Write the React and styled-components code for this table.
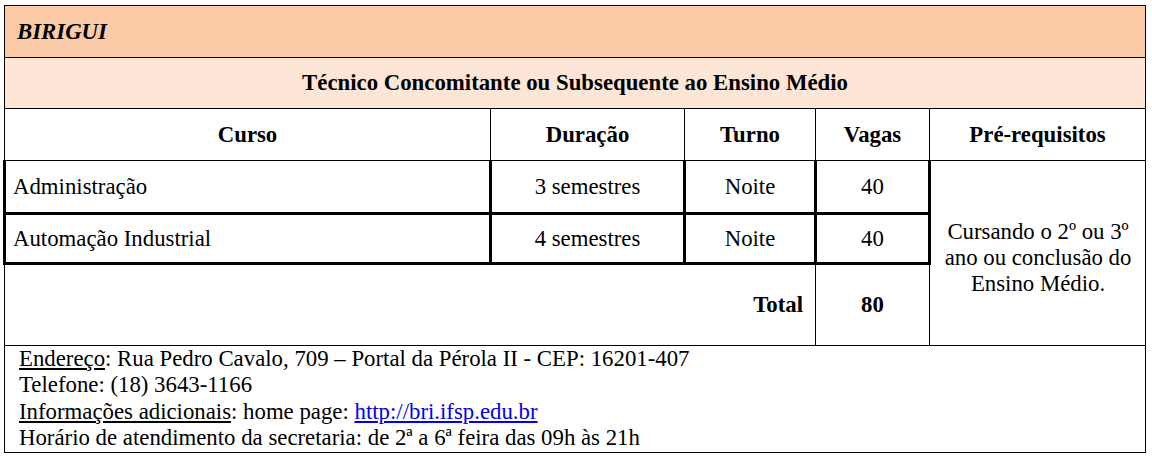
import React from 'react';
import styled, { createGlobalStyle } from 'styled-components';

const GlobalStyle = createGlobalStyle`
    body {
        margin: 0;
        background: #ffffff;
        font-family: "Liberation Serif", "Times New Roman", serif;
        color: #000;
    }
`

const Page = styled.div`
    padding: 5px 0 0 3px;
    width: 1152px;
    height: 457px;
    box-sizing: border-box;
`

const Table = styled.table`
    border-collapse: collapse;
    table-layout: fixed;
    width: 1141px;
    font-family: "Liberation Serif", "Times New Roman", serif;
    font-size: 22.8px;
    color: #000;

    td {
        border: 1px solid #000;
        padding: 0;
        vertical-align: middle;
    }
`

const CampusCell = styled.td`
    background: #fbcaa7;
    height: 51px;
    padding-left: 12px !important;
    font-weight: bold;
    font-style: italic;
`

const TitleCell = styled.td`
    background: #fde6d6;
    height: 50px;
    text-align: center;
    font-weight: bold;
`

const HeadCell = styled.td`
    height: 51px;
    text-align: center;
    font-weight: bold;
`

const DataCell = styled.td`
    height: ${p => p.$h}px;
    text-align: ${p => (p.$left ? 'left' : 'center')};
    padding-left: ${p => (p.$left ? '7px' : '0')} !important;
    border-width: 1px 3px 3px 3px !important;
`

const ReqCell = styled.td`
    text-align: center;
    line-height: 26px;
    padding: 10px 6px 0 6px !important;
`

const TotalCell = styled.td`
    height: 80px;
    font-weight: bold;
    text-align: ${p => (p.$right ? 'right' : 'center')};
    padding-right: ${p => (p.$right ? '12px' : '0')} !important;
`

const InfoCell = styled.td`
    height: 106px;
    padding: 0 0 0 14px !important;
    vertical-align: top !important;
`

const InfoLines = styled.div`
    display: flex;
    flex-direction: column;
    line-height: 26.3px;
`

const Under = styled.span`
    text-decoration: underline;
`

const Link = styled.a`
    color: #0000ee;
    text-decoration: underline;
`

const courses = [
    { name: 'Administração', duration: '3 semestres', shift: 'Noite', seats: 40, h: 51 },
    { name: 'Automação Industrial', duration: '4 semestres', shift: 'Noite', seats: 40, h: 47 },
]

export default function App() {
    return (
        <Page>
            <GlobalStyle />
            <Table>
                <colgroup>
                    <col style={{ width: 486 }} />
                    <col style={{ width: 194 }} />
                    <col style={{ width: 131 }} />
                    <col style={{ width: 114 }} />
                    <col style={{ width: 216 }} />
                </colgroup>
                <tbody>
                    <tr>
                        <CampusCell colSpan={5}>BIRIGUI</CampusCell>
                    </tr>
                    <tr>
                        <TitleCell colSpan={5}>Técnico Concomitante ou Subsequente ao Ensino Médio</TitleCell>
                    </tr>
                    <tr>
                        <HeadCell>Curso</HeadCell>
                        <HeadCell>Duração</HeadCell>
                        <HeadCell>Turno</HeadCell>
                        <HeadCell>Vagas</HeadCell>
                        <HeadCell>Pré-requisitos</HeadCell>
                    </tr>
                    {courses.map((c, i) => (
                        <tr key={c.name}>
                            <DataCell $left $h={c.h}>{c.name}</DataCell>
                            <DataCell $h={c.h}>{c.duration}</DataCell>
                            <DataCell $h={c.h}>{c.shift}</DataCell>
                            <DataCell $h={c.h}>{c.seats}</DataCell>
                            {i === 0 && (
                                <ReqCell rowSpan={3}>
                                    Cursando o 2º ou 3º ano ou conclusão do Ensino Médio.
                                </ReqCell>
                            )}
                        </tr>
                    ))}
                    <tr>
                        <TotalCell colSpan={3} $right>Total</TotalCell>
                        <TotalCell>80</TotalCell>
                    </tr>
                    <tr>
                        <InfoCell colSpan={5}>
                            <InfoLines>
                                <span><Under>Endereço</Under>: Rua Pedro Cavalo, 709 – Portal da Pérola II - CEP: 16201-407</span>
                                <span>Telefone: (18) 3643-1166</span>
                                <span><Under>Informações adicionais</Under>: home page: <Link href="#">http://bri.ifsp.edu.br</Link></span>
                                <span>Horário de atendimento da secretaria: de 2ª a 6ª feira das 09h às 21h</span>
                            </InfoLines>
                        </InfoCell>
                    </tr>
                </tbody>
            </Table>
        </Page>
    )
}
